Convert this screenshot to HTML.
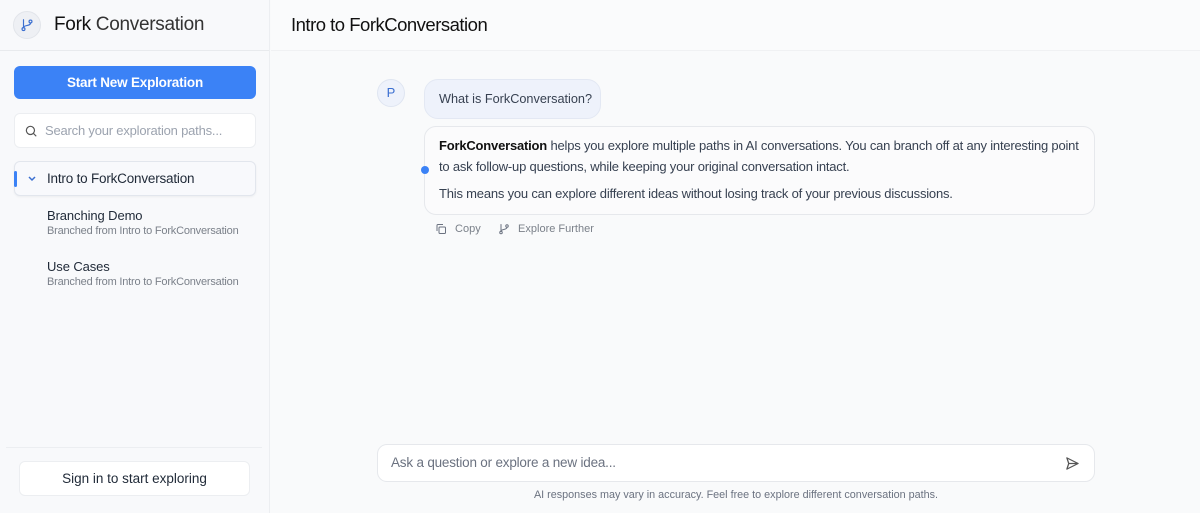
<!DOCTYPE html>
<html><head><meta charset="utf-8"><style>
*{box-sizing:border-box;margin:0;padding:0}
body{width:1200px;height:513px;overflow:hidden;font-family:"Liberation Sans",sans-serif;background:#f9fafb;color:#1f2937;position:relative}
.side{position:absolute;left:0;top:0;width:270px;height:513px;background:#f8f9fb;border-right:1px solid #eceef1}
.logo{height:51px;border-bottom:1px solid #e8eaed;display:flex;align-items:center;padding-left:13px}
.lc{width:28px;height:28px;border-radius:50%;background:#eef0f4;border:1px solid #e2e5ea;display:flex;align-items:center;justify-content:center}
.lt{margin-left:13px;font-size:19px;color:#333;letter-spacing:-0.3px}
.lt b{color:#111}
.btn{position:absolute;left:14px;top:66px;width:242px;height:33px;background:#3b82f6;border-radius:6px;color:#fff;font-size:13.5px;font-weight:bold;text-align:center;line-height:33px;letter-spacing:-0.2px}
.search{position:absolute;left:14px;top:113px;width:242px;height:35px;background:#fff;border:1px solid #eceef1;border-radius:6px;font-size:13px;color:#9ca3af;line-height:33px;padding-left:30px;letter-spacing:-0.2px}
.search svg{position:absolute;left:9px;top:10px}
.item{position:absolute;left:14px;top:161px;width:242px;height:35px;background:#f8f9fc;border:1px solid #e2e6ed;border-radius:6px;box-shadow:0 1px 2px rgba(0,0,0,.05);font-size:13.5px;line-height:33px;padding-left:32px;color:#1f2937;letter-spacing:-0.2px}
.item .bar{position:absolute;left:-1px;top:9px;width:3px;height:16px;background:#3b82f6;border-radius:2px}
.item svg{position:absolute;left:12px;top:13px}
.sub{position:absolute;left:47px;font-size:13px;color:#1f2937;letter-spacing:-0.1px}
.sub small{display:block;font-size:11px;color:#7b818a;margin-top:2px;letter-spacing:-0.2px}
.sep{position:absolute;left:6px;top:447px;width:256px;border-top:1px solid #eceef1}
.sign{position:absolute;left:19px;top:461px;width:231px;height:35px;background:#fff;border:1px solid #eceef1;border-radius:6px;text-align:center;line-height:33px;font-size:13.5px;color:#1f2937}
.head{position:absolute;left:271px;top:0;right:0;height:51px;border-bottom:1px solid #f0f1f3;background:#fafbfc;font-size:18.5px;padding-left:20px;line-height:49px;color:#111;letter-spacing:-0.5px}
.av{position:absolute;left:377px;top:79px;width:28px;height:28px;border-radius:50%;background:#eef2fb;border:1px solid #dfe5f1;color:#3b6fd0;font-size:13px;text-align:center;line-height:26px}
.q{position:absolute;left:424px;top:79px;width:177px;height:40px;background:#eef2fb;border:1px solid #e3e8f3;border-radius:14px;font-size:12.7px;line-height:38px;padding-left:14px;color:#374151;white-space:nowrap}
.a{position:absolute;left:424px;top:126px;width:671px;height:89px;background:#fbfbfc;border:1px solid #e6e8ec;border-radius:12px;padding:8px 14px;font-size:13px;color:#374151;line-height:21px;letter-spacing:-0.2px}
.a p+p{margin-top:6px}
.dot{position:absolute;left:421px;top:166px;width:8px;height:8px;border-radius:50%;background:#3b82f6}
.acts{position:absolute;top:223px;font-size:11px;color:#7b818a;display:flex;align-items:center;gap:5px}
.foot{position:absolute;left:271px;top:432px;right:0;bottom:0;background:#f9fafb}
.inp{position:absolute;left:377px;top:444px;width:718px;height:38px;background:#fff;border:1px solid #e6e8ec;border-radius:10px;font-size:13.5px;color:#6b7280;line-height:36px;padding-left:13px;letter-spacing:-0.2px}
.inp svg{position:absolute;right:14px;top:11px}
.note{position:absolute;left:377px;width:718px;top:489px;text-align:center;font-size:10.8px;color:#6b7280}
</style></head><body>
<div class="side">
 <div class="logo"><div class="lc"><svg width="14" height="14" viewBox="0 0 24 24" fill="none" stroke="#3b6fd0" stroke-width="2" stroke-linecap="round"><circle cx="6" cy="19" r="2.5"/><circle cx="18" cy="6" r="2.5"/><path d="M6 3v13.5M18 8.5c0 6-12 3-12 8"/></svg></div><div class="lt"><b style="font-weight:500">Fork</b> Conversation</div></div>
 <div class="btn">Start New Exploration</div>
 <div class="search"><svg width="14" height="14" viewBox="0 0 24 24" fill="none" stroke="#555" stroke-width="2"><circle cx="11" cy="11" r="7"/><path d="M16 16l5 5"/></svg>Search your exploration paths...</div>
 <div class="item"><span class="bar"></span><svg width="10" height="7" viewBox="0 0 10 7" fill="none" stroke="#3b6fd0" stroke-width="1.5"><path d="M2 2l3 3 3-3"/></svg>Intro to ForkConversation</div>
 <div class="sub" style="top:208px">Branching Demo<small>Branched from Intro to ForkConversation</small></div>
 <div class="sub" style="top:259px">Use Cases<small>Branched from Intro to ForkConversation</small></div>
 <div class="sep"></div>
 <div class="sign">Sign in to start exploring</div>
</div>
<div class="head">Intro to ForkConversation</div>
<div class="av">P</div>
<div class="q">What is ForkConversation?</div>
<div class="a"><p><b style="color:#111">ForkConversation</b> helps you explore multiple paths in AI conversations. You can branch off at any interesting point to ask follow-up questions, while keeping your original conversation intact.</p><p>This means you can explore different ideas without losing track of your previous discussions.</p></div>
<div class="dot"></div>
<div class="acts" style="left:435px"><svg width="12" height="12" viewBox="0 0 24 24" fill="none" stroke="#6b7280" stroke-width="2"><rect x="8" y="8" width="13" height="13" rx="2"/><path d="M4 16V5a2 2 0 0 1 2-2h10"/></svg>&nbsp;Copy</div>
<div class="acts" style="left:498px"><svg width="12" height="12" viewBox="0 0 24 24" fill="none" stroke="#6b7280" stroke-width="2" stroke-linecap="round"><circle cx="6" cy="19" r="2.5"/><circle cx="18" cy="6" r="2.5"/><path d="M6 3v13.5M18 8.5c0 6-12 3-12 8"/></svg>&nbsp;Explore Further</div>
<div class="foot"></div>
<div class="inp">Ask a question or explore a new idea...<svg width="15" height="15" viewBox="0 0 24 24" fill="none" stroke="#555" stroke-width="2" stroke-linejoin="round"><path d="M3 3l18 9-18 9 3-9z M6 12h15"/></svg></div>
<div class="note">AI responses may vary in accuracy. Feel free to explore different conversation paths.</div>
</body></html>
